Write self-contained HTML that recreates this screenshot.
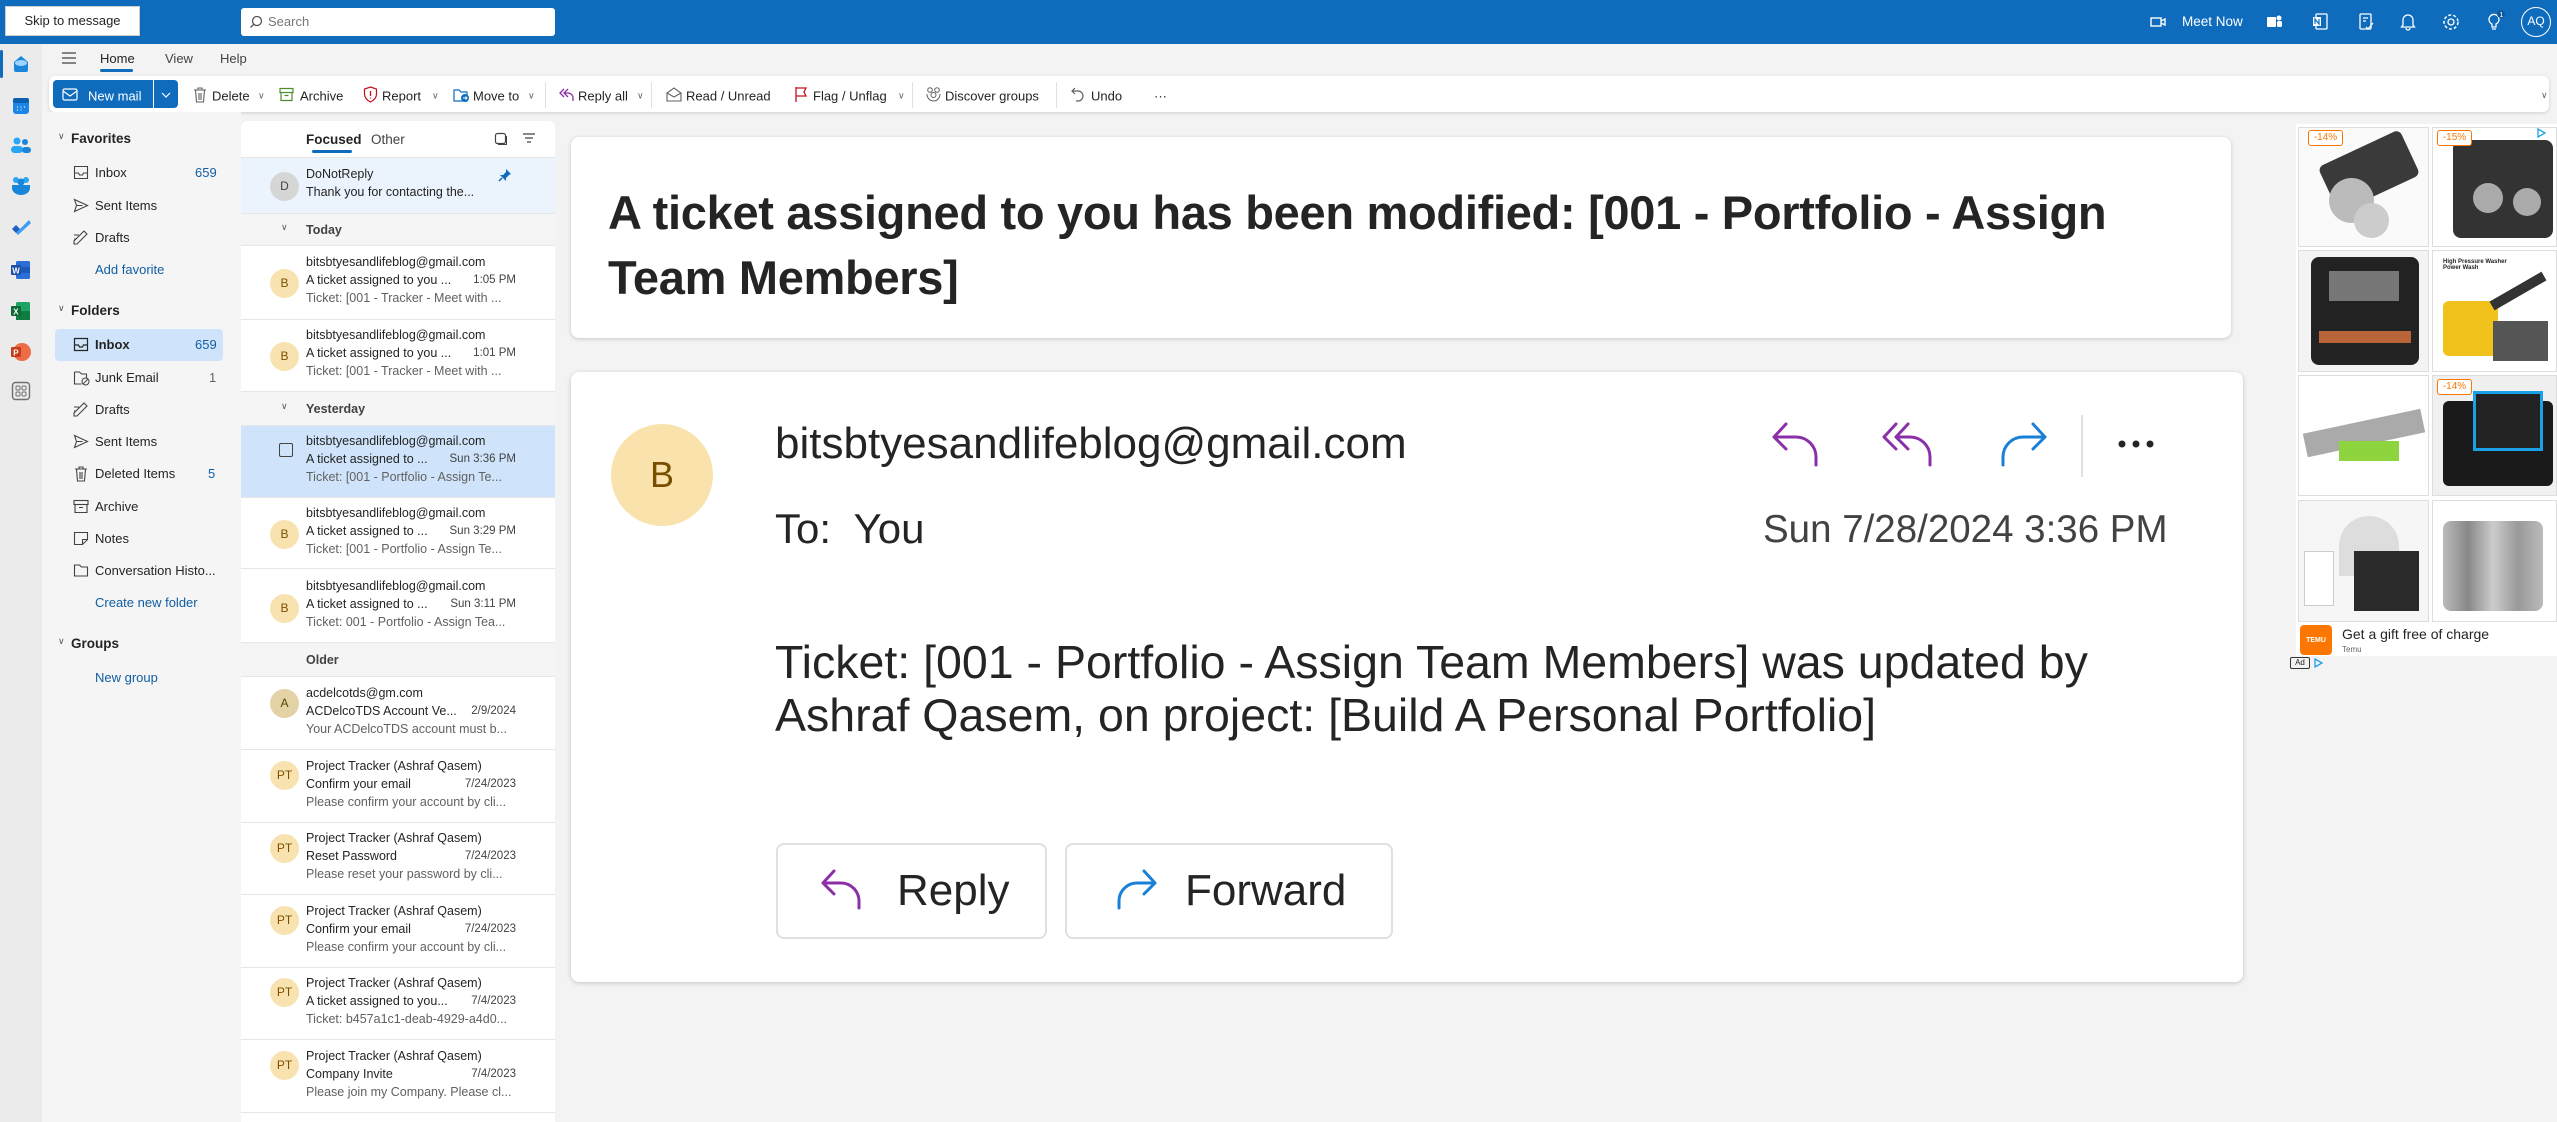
<!DOCTYPE html>
<html><head><meta charset="utf-8">
<style>
*{box-sizing:border-box;margin:0;padding:0}
body{width:2557px;height:1122px;overflow:hidden;background:#f3f3f3;font-family:"Liberation Sans",sans-serif;color:#242424;position:relative}
.a{position:absolute}
.top{left:0;top:0;width:2557px;height:44px;background:#0f6cbd}
.t{position:absolute;white-space:nowrap}
.ic{position:absolute}
.fi{font-size:13px;color:#242424}
.row{position:absolute;left:241px;width:314px;border-bottom:1px solid #e6e6e6;background:#fff}
.av{position:absolute;left:270px;width:29px;height:29px;border-radius:50%;background:#f8e3b0;color:#7a4e00;font-size:12px;text-align:center;line-height:29px}
.l1{position:absolute;left:306px;font-size:12.5px;color:#242424;white-space:nowrap}
.l3{position:absolute;left:306px;font-size:12.5px;color:#616161;white-space:nowrap}
.dt{position:absolute;right:2041px;font-size:11.5px;color:#424242;white-space:nowrap}
.grp{position:absolute;left:241px;width:314px;background:#f5f5f5;border-bottom:1px solid #e6e6e6}
.tb{position:absolute;top:96px;transform:translateY(-50%);font-size:13px;color:#242424;white-space:nowrap}
.sep{position:absolute;top:82px;width:1px;height:26px;background:#e0e0e0}
</style></head><body>
<!-- top bar -->
<div class="a top"></div>
<div class="a" style="left:5px;top:6px;width:135px;height:30px;background:#fff;border:1px solid #ccc;font-size:13px;line-height:28px;text-align:center">Skip to message</div>
<div class="a" style="left:241px;top:8px;width:314px;height:28px;background:#fff;border-radius:3px"></div>
<svg class="ic" style="left:249px;top:15px" width="14" height="14" viewBox="0 0 14 14"><circle cx="8" cy="6" r="4.5" fill="none" stroke="#555" stroke-width="1.3"/><path d="M5 9L1.5 12.5" stroke="#555" stroke-width="1.3"/></svg>
<div class="t" style="left:268px;top:14px;font-size:13px;color:#767676">Search</div>
<svg class="ic" style="left:2150px;top:16px" width="16" height="12"><rect x="1" y="2" width="10" height="8" fill="none" stroke="#fff" stroke-width="1.4"/><path d="M11 5l4-2v6l-4-2" fill="none" stroke="#fff" stroke-width="1.4"/></svg>
<div class="t" style="left:2182px;top:14px;font-size:13.5px;color:#fff">Meet Now</div>
<svg class="ic" style="left:2266px;top:13px" width="17" height="17"><rect x="1" y="4" width="9" height="10" rx="1" fill="#fff"/><circle cx="13" cy="5" r="2.5" fill="#fff"/><rect x="11" y="8" width="5" height="6" rx="1.5" fill="#fff"/></svg>
<svg class="ic" style="left:2312px;top:13px" width="17" height="18"><rect x="4" y="1" width="11" height="15" rx="1" fill="none" stroke="#fff" stroke-width="1.3"/><rect x="1" y="4" width="8" height="9" fill="#fff"/><path d="M3 11V6l4 5V6" stroke="#0f6cbd" stroke-width="1.2" fill="none"/></svg>
<svg class="ic" style="left:2358px;top:13px" width="17" height="18"><rect x="2" y="1" width="11" height="15" rx="1" fill="none" stroke="#fff" stroke-width="1.3"/><path d="M5 5h5M5 8h3M8 14l2 2 5-6" stroke="#fff" stroke-width="1.3" fill="none"/></svg>
<svg class="ic" style="left:2400px;top:12px" width="16" height="19"><path d="M3 13V8a5 5 0 0110 0v5l1.5 2h-13z M6 16a2 2 0 004 0" fill="none" stroke="#fff" stroke-width="1.3"/></svg>
<svg class="ic" style="left:2442px;top:13px" width="18" height="18"><circle cx="9" cy="9" r="3" fill="none" stroke="#fff" stroke-width="1.3"/><circle cx="9" cy="9" r="7" fill="none" stroke="#fff" stroke-width="1.5" stroke-dasharray="3 2"/></svg>
<svg class="ic" style="left:2486px;top:10px" width="20" height="22"><path d="M6 14a5 5 0 114 0v3H6z M6 19h4" fill="none" stroke="#fff" stroke-width="1.3"/><circle cx="15" cy="4" r="4" fill="#0b5aa0"/><text x="13.5" y="7" font-size="7" fill="#fff" font-family="Liberation Sans">1</text></svg>
<div class="a" style="left:2521px;top:7px;width:30px;height:30px;border-radius:50%;border:1.5px solid #fff;color:#fff;font-size:12px;text-align:center;line-height:27px">AQ</div>

<!-- left rail -->
<div class="a" style="left:0;top:44px;width:42px;height:1078px;background:#ebebeb"></div>
<div class="a" style="left:0;top:50px;width:3px;height:28px;background:#0f6cbd;border-radius:2px"></div>
<svg class="ic" style="left:11px;top:54px" width="20" height="20"><path d="M3 8l7-6 7 6v8a2 2 0 01-2 2H5a2 2 0 01-2-2z" fill="#1a86d9"/><ellipse cx="10" cy="9" rx="6" ry="3" fill="#9fd3ff"/></svg>
<svg class="ic" style="left:11px;top:96px" width="20" height="20"><rect x="2" y="2" width="16" height="16" rx="3" fill="#1a86e6"/><rect x="2" y="2" width="16" height="5" rx="2" fill="#0a5fb3"/><path d="M6 11h1M9.5 11h1M13 11h1M6 14h1M9.5 14h1" stroke="#cde" stroke-width="1.4"/></svg>
<svg class="ic" style="left:10px;top:136px" width="22" height="20"><circle cx="7" cy="5" r="3.5" fill="#29a5f5"/><circle cx="15" cy="6" r="3" fill="#1a86d9"/><rect x="1" y="10" width="12" height="7" rx="3.5" fill="#29a5f5"/><rect x="12" y="11" width="9" height="6" rx="3" fill="#1a86d9"/></svg>
<svg class="ic" style="left:10px;top:176px" width="22" height="20"><circle cx="6" cy="4" r="3" fill="#29a5f5"/><circle cx="16" cy="4" r="3" fill="#29a5f5"/><circle cx="11" cy="6" r="3.5" fill="#1a86d9"/><path d="M2 9h18v3a9 7 0 01-18 0z" fill="#1a86d9"/></svg>
<svg class="ic" style="left:10px;top:218px" width="22" height="20"><path d="M2 11l4 4 4-4-4-4z" fill="#1f5fc4"/><path d="M6 15L19 2l2 3L8 17z" fill="#3b9bf5"/></svg>
<svg class="ic" style="left:10px;top:260px" width="22" height="20"><rect x="6" y="1" width="14" height="18" rx="1.5" fill="#2b6fd6"/><rect x="6" y="7" width="14" height="6" fill="#1d5ab8"/><rect x="1" y="5" width="10" height="10" rx="1" fill="#1a4fa8"/><text x="2.3" y="13.5" font-size="8" fill="#fff" font-family="Liberation Sans" font-weight="bold">W</text></svg>
<svg class="ic" style="left:10px;top:301px" width="22" height="20"><rect x="6" y="1" width="14" height="18" rx="1.5" fill="#21a366"/><rect x="6" y="10" width="14" height="9" fill="#107c41"/><rect x="1" y="5" width="10" height="10" rx="1" fill="#0e6b38"/><text x="3.3" y="13.5" font-size="8" fill="#fff" font-family="Liberation Sans" font-weight="bold">X</text></svg>
<svg class="ic" style="left:10px;top:342px" width="22" height="20"><circle cx="12" cy="10" r="9" fill="#ed6c47"/><rect x="1" y="5" width="10" height="10" rx="1" fill="#c43e1c"/><text x="3.3" y="13.5" font-size="8" fill="#fff" font-family="Liberation Sans" font-weight="bold">P</text></svg>
<svg class="ic" style="left:11px;top:381px" width="20" height="20"><rect x="1.5" y="1.5" width="17" height="17" rx="3" fill="none" stroke="#707070" stroke-width="1.4"/><rect x="5" y="5" width="4" height="4" rx="1" fill="none" stroke="#707070"/><rect x="11" y="5" width="4" height="4" rx="1" fill="none" stroke="#707070"/><rect x="5" y="11" width="4" height="4" rx="1" fill="none" stroke="#707070"/><rect x="11" y="11" width="4" height="4" rx="1" fill="none" stroke="#707070"/></svg>

<!-- tabs -->
<svg class="ic" style="left:61px;top:51px" width="16" height="14"><path d="M1 2h14M1 7h14M1 12h14" stroke="#424242" stroke-width="1.3"/></svg>
<div class="t" style="left:100px;top:51px;font-size:13px;color:#242424">Home</div>
<div class="a" style="left:100px;top:69px;width:33px;height:3px;background:#0f6cbd;border-radius:2px"></div>
<div class="t" style="left:165px;top:51px;font-size:13px;color:#424242">View</div>
<div class="t" style="left:220px;top:51px;font-size:13px;color:#424242">Help</div>

<!-- toolbar -->
<div class="a" style="left:49px;top:76px;width:2500px;height:36px;background:#fff;border-radius:6px;box-shadow:0 1px 3px rgba(0,0,0,.15)"></div>
<div class="a" style="left:53px;top:80px;width:125px;height:28px;background:#0f6cbd;border-radius:4px"></div>
<div class="a" style="left:153px;top:80px;width:1px;height:28px;background:#fff"></div>
<svg class="ic" style="left:62px;top:88px" width="16" height="13"><rect x="1" y="1" width="14" height="11" rx="1.5" fill="none" stroke="#fff" stroke-width="1.2"/><path d="M1 3l7 5 7-5" fill="none" stroke="#fff" stroke-width="1.2"/></svg>
<div class="tb" style="left:88px;color:#fff">New mail</div>
<svg class="ic" style="left:161px;top:92px" width="10" height="7"><path d="M1 1l4 4 4-4" fill="none" stroke="#fff" stroke-width="1.2"/></svg>
<svg class="ic" style="left:193px;top:87px" width="14" height="16"><path d="M1 3h12M5 3V1h4v2M2.5 3l1 12h7l1-12M6 6v7M8 6v7" fill="none" stroke="#616161" stroke-width="1.1"/></svg>
<div class="tb" style="left:212px">Delete</div><div class="tb" style="left:258px;font-size:9px;color:#666">&#8744;</div>
<svg class="ic" style="left:279px;top:87px" width="15" height="15"><rect x="1" y="1.5" width="13" height="4" fill="none" stroke="#4c8c2b" stroke-width="1.2"/><path d="M2 5.5v8h11v-8M5.5 8.5h4" fill="none" stroke="#4c8c2b" stroke-width="1.2"/></svg>
<div class="tb" style="left:300px">Archive</div>
<svg class="ic" style="left:363px;top:86px" width="15" height="17"><path d="M7.5 1l6 2v5c0 4-3 6.5-6 8-3-1.5-6-4-6-8V3z" fill="none" stroke="#c50f1f" stroke-width="1.2"/><path d="M7.5 5v5M7.5 11.5v1" stroke="#c50f1f" stroke-width="1.3"/></svg>
<div class="tb" style="left:382px">Report</div><div class="tb" style="left:432px;font-size:9px;color:#666">&#8744;</div>
<svg class="ic" style="left:453px;top:87px" width="17" height="16"><path d="M1 3h5l2 2h6v9H1z" fill="none" stroke="#0f6cbd" stroke-width="1.2"/><circle cx="12" cy="11" r="4" fill="#0f6cbd"/><path d="M10 11h4M12.5 9.5L14 11l-1.5 1.5" stroke="#fff" fill="none"/></svg>
<div class="tb" style="left:473px">Move to</div><div class="tb" style="left:528px;font-size:9px;color:#666">&#8744;</div>
<div class="sep" style="left:545px"></div>
<svg class="ic" style="left:558px;top:87px" width="16" height="15"><path d="M6 2L2 6l4 4M10 2L6 6l4 4M6 6h4a5 5 0 015 5v3" fill="none" stroke="#8b2fa8" stroke-width="1.3"/></svg>
<div class="tb" style="left:578px">Reply all</div><div class="tb" style="left:637px;font-size:9px;color:#666">&#8744;</div>
<div class="sep" style="left:651px"></div>
<svg class="ic" style="left:666px;top:86px" width="16" height="16"><path d="M1 7l7-5 7 5v8H1zM1 7l7 4 7-4" fill="none" stroke="#616161" stroke-width="1.1"/></svg>
<div class="tb" style="left:686px">Read / Unread</div>
<svg class="ic" style="left:794px;top:86px" width="14" height="17"><path d="M2 1v15M2 2h10l-2 4 2 4H2" fill="none" stroke="#c50f1f" stroke-width="1.3"/></svg>
<div class="tb" style="left:813px">Flag / Unflag</div><div class="tb" style="left:898px;font-size:9px;color:#666">&#8744;</div>
<div class="sep" style="left:912px"></div>
<svg class="ic" style="left:925px;top:86px" width="17" height="17"><circle cx="5" cy="4" r="2.3" fill="none" stroke="#616161"/><circle cx="12" cy="4" r="2.3" fill="none" stroke="#616161"/><circle cx="8.5" cy="9" r="2.5" fill="none" stroke="#616161"/><path d="M2 8c0 4 3 7 6.5 7S15 12 15 8" fill="none" stroke="#616161"/></svg>
<div class="tb" style="left:945px">Discover groups</div>
<div class="sep" style="left:1056px"></div>
<svg class="ic" style="left:1071px;top:87px" width="14" height="15"><path d="M4 1L1 4l3 3M1 4h6a5 5 0 010 10H5" fill="none" stroke="#616161" stroke-width="1.2"/></svg>
<div class="tb" style="left:1091px">Undo</div>
<div class="tb" style="left:1154px;font-size:13px">···</div>
<div class="t" style="left:2541px;top:90px;font-size:9px;color:#666">&#8744;</div>

<!-- folder pane -->
<div class="a" style="left:42px;top:112px;width:199px;height:1010px;background:#f5f5f5"></div>
<div class="a" style="left:55px;top:329px;width:168px;height:32px;background:#cfe4fa;border-radius:4px"></div>
<div class="t" style="left:58px;top:131px;font-size:9px;color:#555">&#8744;</div>
<div class="t" style="left:71px;top:131px;font-size:13.5px;font-weight:bold;color:#242424">Favorites</div>
<div class="t fi" style="left:95px;top:165px">Inbox</div><div class="t fi" style="left:195px;top:165px;color:#115ea3">659</div>
<div class="t fi" style="left:95px;top:198px">Sent Items</div>
<div class="t fi" style="left:95px;top:230px">Drafts</div>
<div class="t fi" style="left:95px;top:262px;color:#115ea3">Add favorite</div>
<div class="t" style="left:58px;top:303px;font-size:9px;color:#555">&#8744;</div>
<div class="t" style="left:71px;top:303px;font-size:13.5px;font-weight:bold">Folders</div>
<div class="t fi" style="left:95px;top:337px;font-weight:bold">Inbox</div><div class="t fi" style="left:195px;top:337px;color:#115ea3">659</div>
<div class="t fi" style="left:95px;top:370px">Junk Email</div><div class="t fi" style="left:209px;top:370px;color:#616161">1</div>
<div class="t fi" style="left:95px;top:402px">Drafts</div>
<div class="t fi" style="left:95px;top:434px">Sent Items</div>
<div class="t fi" style="left:95px;top:466px">Deleted Items</div><div class="t fi" style="left:208px;top:466px;color:#115ea3">5</div>
<div class="t fi" style="left:95px;top:499px">Archive</div>
<div class="t fi" style="left:95px;top:531px">Notes</div>
<div class="t fi" style="left:95px;top:563px">Conversation Histo...</div>
<div class="t fi" style="left:95px;top:595px;color:#115ea3">Create new folder</div>
<div class="t" style="left:58px;top:636px;font-size:9px;color:#555">&#8744;</div>
<div class="t" style="left:71px;top:636px;font-size:13.5px;font-weight:bold">Groups</div>
<div class="t fi" style="left:95px;top:670px;color:#115ea3">New group</div>
<!-- folder icons -->
<svg class="ic" style="left:73px;top:165px" width="16" height="15"><path d="M1.5 1.5h13v12h-13zM1.5 8h4l1 2h3l1-2h4" fill="none" stroke="#424242" stroke-width="1.1"/></svg>
<svg class="ic" style="left:73px;top:198px" width="16" height="15"><path d="M1.5 1.5l13 6-13 6 2-6zM3.5 7.5h6" fill="none" stroke="#424242" stroke-width="1.1"/></svg>
<svg class="ic" style="left:73px;top:230px" width="16" height="15"><path d="M1 14h3l10-10-3-3L1 11zM1 5h5M1 9h2" fill="none" stroke="#424242" stroke-width="1.1"/></svg>
<svg class="ic" style="left:73px;top:337px" width="16" height="15"><path d="M1.5 1.5h13v12h-13zM1.5 8h4l1 2h3l1-2h4" fill="none" stroke="#242424" stroke-width="1.2"/></svg>
<svg class="ic" style="left:73px;top:370px" width="17" height="16"><path d="M1.5 2h5l2 2h5v4M1.5 2v12h7" fill="none" stroke="#424242" stroke-width="1.1"/><circle cx="12.5" cy="11.5" r="3.5" fill="none" stroke="#424242"/><path d="M10 14l5-5" stroke="#424242"/></svg>
<svg class="ic" style="left:73px;top:402px" width="16" height="15"><path d="M1 14h3l10-10-3-3L1 11zM1 5h5M1 9h2" fill="none" stroke="#424242" stroke-width="1.1"/></svg>
<svg class="ic" style="left:73px;top:434px" width="16" height="15"><path d="M1.5 1.5l13 6-13 6 2-6zM3.5 7.5h6" fill="none" stroke="#424242" stroke-width="1.1"/></svg>
<svg class="ic" style="left:74px;top:466px" width="14" height="16"><path d="M1 3h12M5 3V1h4v2M2.5 3l1 12h7l1-12M6 6v7M8 6v7" fill="none" stroke="#424242" stroke-width="1.1"/></svg>
<svg class="ic" style="left:73px;top:499px" width="16" height="15"><rect x="1" y="1.5" width="14" height="4" fill="none" stroke="#424242" stroke-width="1.1"/><path d="M2 5.5v8h12v-8M6 8.5h4" fill="none" stroke="#424242" stroke-width="1.1"/></svg>
<svg class="ic" style="left:73px;top:531px" width="16" height="15"><path d="M1.5 1.5h13v7l-5 5h-8zM9.5 13.5v-5h5" fill="none" stroke="#424242" stroke-width="1.1"/></svg>
<svg class="ic" style="left:73px;top:563px" width="16" height="15"><path d="M1.5 2h5l2 2h6v9h-13z" fill="none" stroke="#424242" stroke-width="1.1"/></svg>

<!-- message list -->
<div class="a" style="left:241px;top:121px;width:314px;height:1001px;background:#fff;border-radius:6px 6px 0 0"></div>
<div class="t" style="left:306px;top:132px;font-size:13.5px;font-weight:bold;color:#242424">Focused</div>
<div class="a" style="left:312px;top:150px;width:40px;height:3px;background:#0f6cbd;border-radius:2px"></div>
<div class="t" style="left:371px;top:132px;font-size:13.5px;color:#424242">Other</div>
<svg class="ic" style="left:494px;top:132px" width="14" height="14"><rect x="1.5" y="1.5" width="10" height="10" rx="2" fill="none" stroke="#424242" stroke-width="1.2"/><path d="M12.5 4v8.5H4" fill="none" stroke="#424242"/></svg>
<svg class="ic" style="left:522px;top:132px" width="14" height="12"><path d="M1 2h12M3 6h8M5 10h4" stroke="#424242" stroke-width="1.2"/></svg>
<div class="a" style="left:241px;top:157px;width:314px;height:1px;background:#e6e6e6"></div>

<div class="row" style="top:158px;height:56px;background:#ebf3fc"></div>
<div class="av" style="top:172px;background:#d6d6d6;color:#424242">D</div>
<div class="l1" style="top:167px">DoNotReply</div>
<div class="l1" style="top:185px">Thank you for contacting the...</div>
<svg class="ic" style="left:498px;top:168px" width="14" height="14"><path d="M8 1l5 5-2 1-3 3 0 3-6-6 3 0 3-3z" fill="#0f6cbd"/><path d="M4 10l-3 3" stroke="#0f6cbd" stroke-width="1.5"/></svg>

<div class="grp" style="top:214px;height:32px"></div>
<div class="t" style="left:281px;top:222px;font-size:9px;color:#555">&#8744;</div>
<div class="t" style="left:306px;top:223px;font-size:12.5px;font-weight:bold;color:#424242">Today</div>

<div class="row" style="top:246px;height:74px"></div>
<div class="av" style="top:269px">B</div>
<div class="l1" style="top:255px">bitsbtyesandlifeblog@gmail.com</div>
<div class="l1" style="top:273px">A ticket assigned to you ...</div><div class="dt" style="top:274px">1:05 PM</div>
<div class="l3" style="top:291px">Ticket: [001 - Tracker - Meet with ...</div>

<div class="row" style="top:320px;height:72px"></div>
<div class="av" style="top:342px">B</div>
<div class="l1" style="top:328px">bitsbtyesandlifeblog@gmail.com</div>
<div class="l1" style="top:346px">A ticket assigned to you ...</div><div class="dt" style="top:347px">1:01 PM</div>
<div class="l3" style="top:364px">Ticket: [001 - Tracker - Meet with ...</div>

<div class="grp" style="top:392px;height:34px"></div>
<div class="t" style="left:281px;top:401px;font-size:9px;color:#555">&#8744;</div>
<div class="t" style="left:306px;top:402px;font-size:12.5px;font-weight:bold;color:#424242">Yesterday</div>

<div class="row" style="top:426px;height:72px;background:#cfe4fa"></div>
<div class="a" style="left:279px;top:443px;width:14px;height:14px;border:1.3px solid #424242;border-radius:2px"></div>
<div class="l1" style="top:434px">bitsbtyesandlifeblog@gmail.com</div>
<div class="l1" style="top:452px">A ticket assigned to ...</div><div class="dt" style="top:453px">Sun 3:36 PM</div>
<div class="l3" style="top:470px">Ticket: [001 - Portfolio - Assign Te...</div>

<div class="row" style="top:498px;height:71px"></div>
<div class="av" style="top:520px">B</div>
<div class="l1" style="top:506px">bitsbtyesandlifeblog@gmail.com</div>
<div class="l1" style="top:524px">A ticket assigned to ...</div><div class="dt" style="top:525px">Sun 3:29 PM</div>
<div class="l3" style="top:542px">Ticket: [001 - Portfolio - Assign Te...</div>

<div class="row" style="top:569px;height:74px"></div>
<div class="av" style="top:594px">B</div>
<div class="l1" style="top:579px">bitsbtyesandlifeblog@gmail.com</div>
<div class="l1" style="top:597px">A ticket assigned to ...</div><div class="dt" style="top:598px">Sun 3:11 PM</div>
<div class="l3" style="top:615px">Ticket: 001 - Portfolio - Assign Tea...</div>

<div class="grp" style="top:643px;height:34px"></div>
<div class="t" style="left:306px;top:653px;font-size:12.5px;font-weight:bold;color:#424242">Older</div>

<div class="row" style="top:677px;height:73px"></div>
<div class="av" style="top:689px;background:#e3d2a6;color:#5a4300">A</div>
<div class="l1" style="top:686px">acdelcotds@gm.com</div>
<div class="l1" style="top:704px">ACDelcoTDS Account Ve...</div><div class="dt" style="top:705px">2/9/2024</div>
<div class="l3" style="top:722px">Your ACDelcoTDS account must b...</div>

<div class="row" style="top:750px;height:73px"></div>
<div class="av" style="top:761px">PT</div>
<div class="l1" style="top:759px">Project Tracker (Ashraf Qasem)</div>
<div class="l1" style="top:777px">Confirm your email</div><div class="dt" style="top:778px">7/24/2023</div>
<div class="l3" style="top:795px">Please confirm your account by cli...</div>

<div class="row" style="top:823px;height:72px"></div>
<div class="av" style="top:834px">PT</div>
<div class="l1" style="top:831px">Project Tracker (Ashraf Qasem)</div>
<div class="l1" style="top:849px">Reset Password</div><div class="dt" style="top:850px">7/24/2023</div>
<div class="l3" style="top:867px">Please reset your password by cli...</div>

<div class="row" style="top:895px;height:73px"></div>
<div class="av" style="top:906px">PT</div>
<div class="l1" style="top:904px">Project Tracker (Ashraf Qasem)</div>
<div class="l1" style="top:922px">Confirm your email</div><div class="dt" style="top:923px">7/24/2023</div>
<div class="l3" style="top:940px">Please confirm your account by cli...</div>

<div class="row" style="top:968px;height:72px"></div>
<div class="av" style="top:978px">PT</div>
<div class="l1" style="top:976px">Project Tracker (Ashraf Qasem)</div>
<div class="l1" style="top:994px">A ticket assigned to you...</div><div class="dt" style="top:995px">7/4/2023</div>
<div class="l3" style="top:1012px">Ticket: b457a1c1-deab-4929-a4d0...</div>

<div class="row" style="top:1040px;height:73px"></div>
<div class="av" style="top:1051px">PT</div>
<div class="l1" style="top:1049px">Project Tracker (Ashraf Qasem)</div>
<div class="l1" style="top:1067px">Company Invite</div><div class="dt" style="top:1068px">7/4/2023</div>
<div class="l3" style="top:1085px">Please join my Company. Please cl...</div>

<!-- subject card -->
<div class="a" style="left:571px;top:137px;width:1660px;height:201px;background:#fff;border-radius:8px;box-shadow:0 1px 4px rgba(0,0,0,.18)"></div>
<div class="t" style="left:608px;top:180px;width:1560px;white-space:normal;font-size:47px;line-height:65px;font-weight:bold;color:#242424;letter-spacing:-0.3px">A ticket assigned to you has been modified: [001 - Portfolio - Assign Team Members]</div>

<!-- body card -->
<div class="a" style="left:571px;top:372px;width:1672px;height:610px;background:#fff;border-radius:8px;box-shadow:0 1px 5px rgba(0,0,0,.2)"></div>
<div class="a" style="left:611px;top:424px;width:102px;height:102px;border-radius:50%;background:#fae2ad;color:#7a4e00;font-size:36px;text-align:center;line-height:102px">B</div>
<div class="t" style="left:775px;top:419px;font-size:44px;color:#242424">bitsbtyesandlifeblog@gmail.com</div>
<div class="t" style="left:775px;top:505px;font-size:42px;color:#242424">To:&nbsp; You</div>
<div class="t" style="left:1763px;top:508px;font-size:38.5px;color:#424242">Sun 7/28/2024 3:36 PM</div>
<svg class="ic" style="left:1770px;top:420px" width="54" height="50"><path d="M16 4L4 17l12 12M4 17h22a20 20 0 0120 20v8" fill="none" stroke="#8b2fa8" stroke-width="3" stroke-linecap="round" stroke-linejoin="round"/></svg>
<svg class="ic" style="left:1880px;top:420px" width="58" height="50"><path d="M16 4L4 17l12 12M28 4L16 17l12 12M16 17h14a20 20 0 0120 20v8" fill="none" stroke="#8b2fa8" stroke-width="3" stroke-linecap="round" stroke-linejoin="round"/></svg>
<svg class="ic" style="left:1995px;top:420px" width="54" height="50"><path d="M38 4l12 13-12 12M50 17H28A20 20 0 008 37v8" fill="none" stroke="#1a7fd6" stroke-width="3" stroke-linecap="round" stroke-linejoin="round"/></svg>
<div class="a" style="left:2081px;top:415px;width:2px;height:62px;background:#e0e0e0"></div>
<svg class="ic" style="left:2116px;top:438px" width="44" height="12"><circle cx="6" cy="6" r="3.5" fill="#242424"/><circle cx="20" cy="6" r="3.5" fill="#242424"/><circle cx="34" cy="6" r="3.5" fill="#242424"/></svg>
<div class="t" style="left:775px;top:636px;font-size:46.5px;line-height:53px;color:#242424">Ticket: [001 - Portfolio - Assign Team Members] was updated by<br>Ashraf Qasem, on project: [Build A Personal Portfolio]</div>
<div class="a" style="left:776px;top:843px;width:271px;height:96px;border:2px solid #e0e0e0;border-radius:8px;background:#fff"></div>
<svg class="ic" style="left:820px;top:868px" width="50" height="46"><path d="M14 3L3 15l11 11M3 15h18a18 18 0 0118 18v7" fill="none" stroke="#8b2fa8" stroke-width="3" stroke-linecap="round" stroke-linejoin="round"/></svg>
<div class="t" style="left:897px;top:866px;font-size:44px;color:#242424">Reply</div>
<div class="a" style="left:1065px;top:843px;width:328px;height:96px;border:2px solid #e0e0e0;border-radius:8px;background:#fff"></div>
<svg class="ic" style="left:1108px;top:868px" width="50" height="46"><path d="M36 3l11 12-11 11M47 15H29A18 18 0 0011 33v7" fill="none" stroke="#1a7fd6" stroke-width="3" stroke-linecap="round" stroke-linejoin="round"/></svg>
<div class="t" style="left:1185px;top:866px;font-size:44px;color:#242424">Forward</div>

<!-- ad -->
<div class="a" style="left:2296px;top:124px;width:261px;height:532px;background:#fff"></div>
<div class="a" style="left:2298px;top:127px;width:131px;height:120px;background:#fafafa;border:1px solid #ddd"><div class="a" style="left:25px;top:18px;width:90px;height:50px;background:#3a3a3a;transform:rotate(-25deg);border-radius:6px"></div><div class="a" style="left:30px;top:50px;width:45px;height:45px;border-radius:50%;background:#bbb"></div><div class="a" style="left:55px;top:75px;width:35px;height:35px;border-radius:50%;background:#ccc"></div></div>
<div class="a" style="left:2432px;top:127px;width:125px;height:120px;background:#fff;border:1px solid #ddd"><div class="a" style="left:20px;top:12px;width:100px;height:98px;background:#333;border-radius:8px"></div><div class="a" style="left:40px;top:55px;width:30px;height:30px;border-radius:50%;background:#aaa"></div><div class="a" style="left:80px;top:60px;width:28px;height:28px;border-radius:50%;background:#aaa"></div></div>
<div class="a" style="left:2298px;top:250px;width:131px;height:122px;background:#f3f3f3;border:1px solid #ddd"><div class="a" style="left:12px;top:6px;width:108px;height:108px;background:#222;border-radius:8px"></div><div class="a" style="left:20px;top:80px;width:92px;height:12px;background:#b8653a"></div><div class="a" style="left:30px;top:20px;width:70px;height:30px;background:#777"></div></div>
<div class="a" style="left:2432px;top:250px;width:125px;height:122px;background:#fff;border:1px solid #ddd"><div class="a" style="left:10px;top:50px;width:55px;height:55px;background:#f1c21b;border-radius:6px"></div><div class="a" style="left:55px;top:35px;width:60px;height:10px;background:#333;transform:rotate(-30deg)"></div><div class="a" style="left:60px;top:70px;width:55px;height:40px;background:#555"></div><div class="t" style="left:10px;top:8px;font-size:6px;font-weight:bold">High Pressure Washer<br>Power Wash</div></div>
<div class="a" style="left:2298px;top:375px;width:131px;height:121px;background:#fff;border:1px solid #ddd"><div class="a" style="left:5px;top:45px;width:120px;height:24px;background:#aaa;transform:rotate(-12deg)"></div><div class="a" style="left:40px;top:65px;width:60px;height:20px;background:#8ed43f"></div></div>
<div class="a" style="left:2432px;top:375px;width:125px;height:121px;background:#f0f0f0;border:1px solid #ddd"><div class="a" style="left:10px;top:25px;width:110px;height:85px;background:#1a1a1a;border-radius:6px"></div><div class="a" style="left:40px;top:15px;width:70px;height:60px;border:3px solid #1aa0e6;background:#222"></div></div>
<div class="a" style="left:2298px;top:500px;width:131px;height:122px;background:#f6f6f6;border:1px solid #ddd"><div class="a" style="left:40px;top:15px;width:60px;height:60px;background:#ddd;border-radius:30px 30px 0 0"></div><div class="a" style="left:55px;top:50px;width:65px;height:60px;background:#2a2a2a"></div><div class="a" style="left:5px;top:50px;width:30px;height:55px;background:#fff;border:1px solid #ccc"></div></div>
<div class="a" style="left:2432px;top:500px;width:125px;height:122px;background:#fff;border:1px solid #ddd"><div class="a" style="left:10px;top:20px;width:100px;height:90px;background:linear-gradient(90deg,#bbb,#888,#ccc,#999,#bbb);border-radius:8px"></div></div>
<div class="a" style="left:2300px;top:625px;width:32px;height:30px;background:#fb7701;border-radius:4px;color:#fff;font-size:7px;font-weight:bold;text-align:center;padding-top:12px">TEMU</div>
<div class="t" style="left:2342px;top:626px;font-size:14px;color:#242424">Get a gift free of charge</div>
<div class="t" style="left:2342px;top:645px;font-size:8px;color:#666">Temu</div>
<div class="a" style="left:2290px;top:657px;width:20px;height:12px;border:1px solid #333;border-radius:2px;font-size:8px;text-align:center;line-height:10px">Ad</div>
<svg class="ic" style="left:2314px;top:658px" width="10" height="10"><path d="M1 1l7 4-7 4z" fill="none" stroke="#1aa0e6" stroke-width="1.3"/></svg>
<svg class="ic" style="left:2537px;top:128px" width="10" height="10"><path d="M1 1l7 4-7 4z" fill="none" stroke="#1aa0e6" stroke-width="1.3"/></svg>
<div class="a" style="left:2308px;top:130px;width:35px;height:16px;border:1px solid #fb7701;border-radius:3px;background:#fff;color:#fb7701;font-size:10px;text-align:center;line-height:14px">-14%</div>
<div class="a" style="left:2437px;top:130px;width:35px;height:16px;border:1px solid #fb7701;border-radius:3px;background:#fff;color:#fb7701;font-size:10px;text-align:center;line-height:14px">-15%</div>
<div class="a" style="left:2437px;top:379px;width:35px;height:16px;border:1px solid #fb7701;border-radius:3px;background:#fff;color:#fb7701;font-size:10px;text-align:center;line-height:14px">-14%</div>
</body></html>
